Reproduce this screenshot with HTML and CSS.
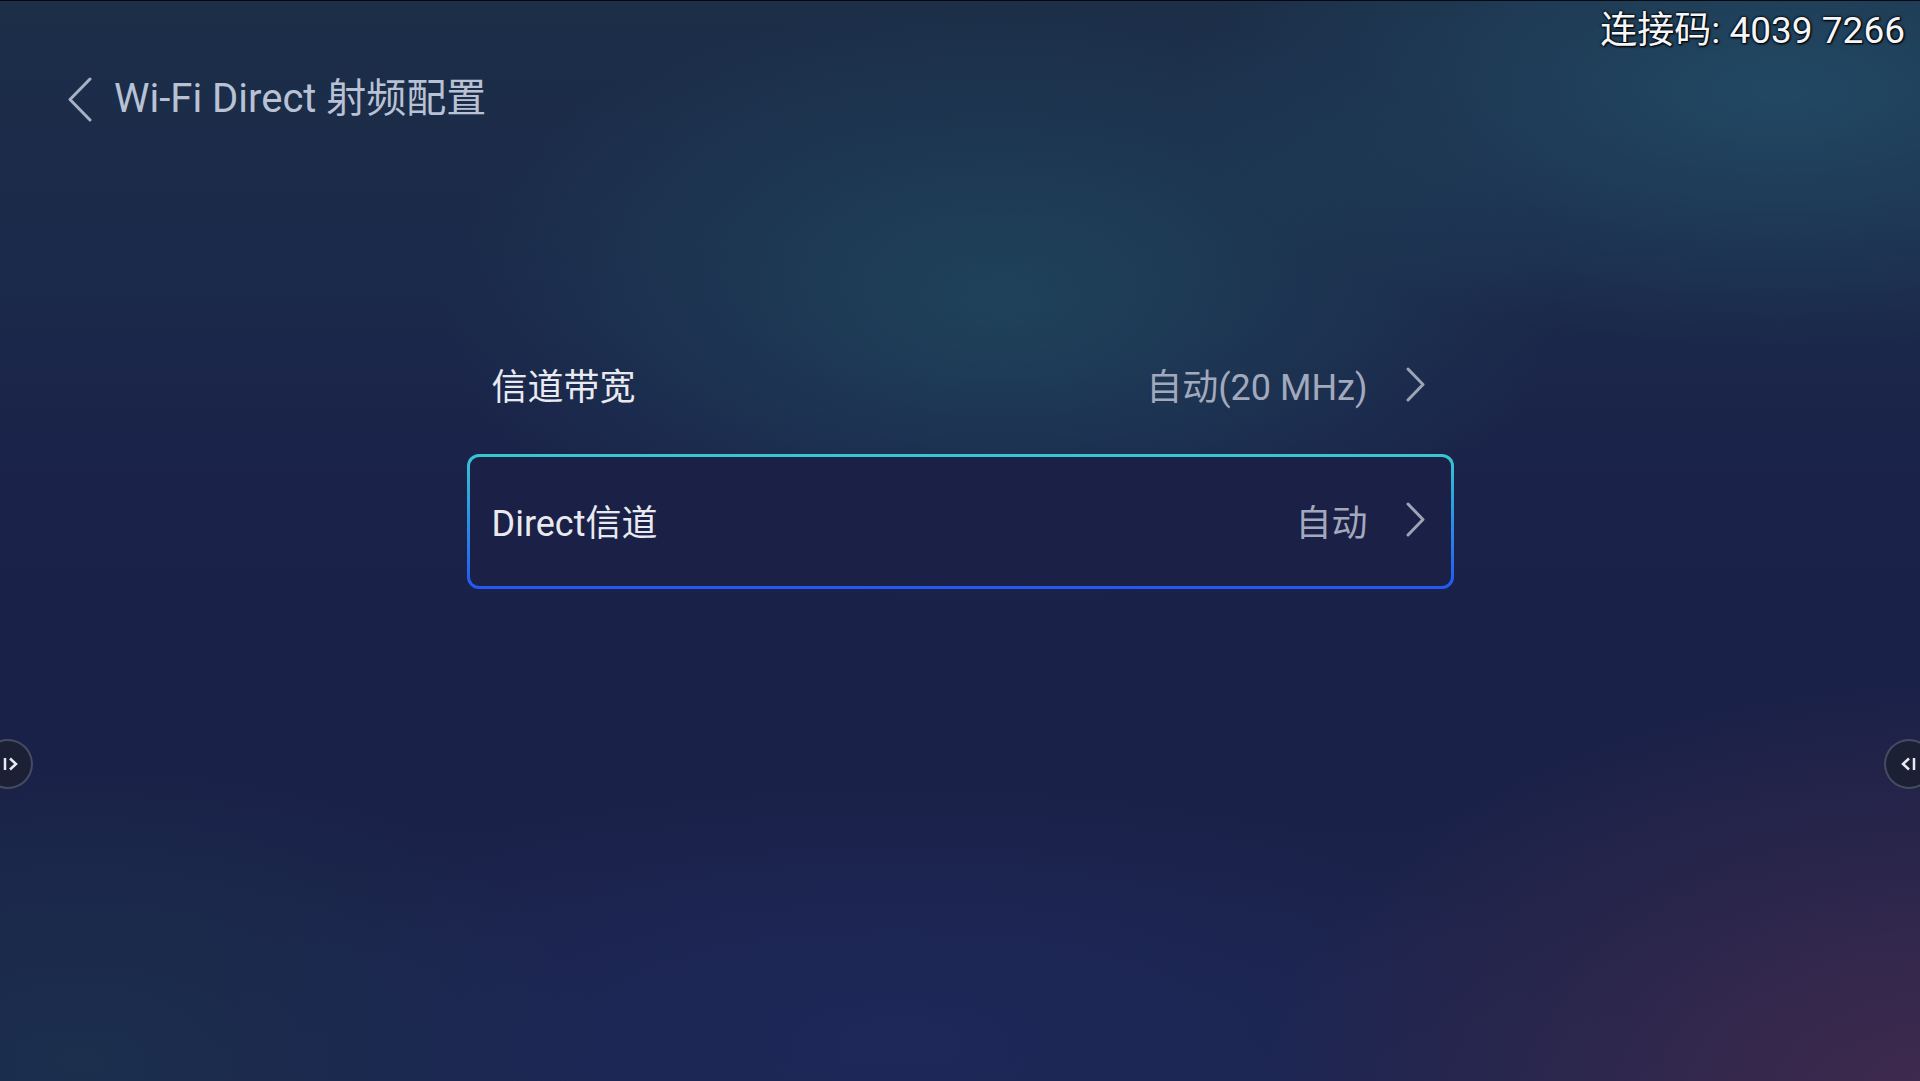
FILE: index.html
```html
<!DOCTYPE html>
<html lang="zh-CN">
<head>
    <meta charset="UTF-8">
    <meta name="viewport" content="width=device-width, initial-scale=1.0">
    <title>Wi-Fi Direct 射频配置</title>
    <link rel="stylesheet" href="styles.css">
</head>
<body>
    <div class="screen">
        <div class="pin-code">连接码: 4039 7266</div>

        <div class="header">
            <svg class="back-icon" width="26" height="45" viewBox="0 0 26 45">
                <polyline points="23,2 3,22.5 23,43" fill="none" stroke="#a8b2c6" stroke-width="3" stroke-linecap="round" stroke-linejoin="round"/>
            </svg>
            <h1 class="title">Wi-Fi Direct 射频配置</h1>
        </div>

        <div class="settings-list">
            <div class="setting-row">
                <span class="setting-label">信道带宽</span>
                <span class="setting-value">自动(20 MHz)</span>
                <svg class="arrow" width="20" height="35" viewBox="0 0 20 35">
                    <polyline points="2,2 17,17.5 2,33" fill="none" stroke="#9ea3b7" stroke-width="3" stroke-linecap="round" stroke-linejoin="round"/>
                </svg>
            </div>
            <div class="setting-row focused">
                <span class="setting-label">Direct信道</span>
                <span class="setting-value">自动</span>
                <svg class="arrow" width="20" height="35" viewBox="0 0 20 35">
                    <polyline points="2,2 17,17.5 2,33" fill="none" stroke="#9ea3b7" stroke-width="3" stroke-linecap="round" stroke-linejoin="round"/>
                </svg>
            </div>
        </div>

        <div class="side-handle left">
            <svg width="16" height="16" viewBox="0 0 16 16">
                <line x1="2" y1="2" x2="2" y2="14" stroke="#e8eaf0" stroke-width="2.5"/>
                <polyline points="7,2.5 13,8 7,13.5" fill="none" stroke="#e8eaf0" stroke-width="2.5"/>
            </svg>
        </div>
        <div class="side-handle right">
            <svg width="16" height="16" viewBox="0 0 16 16">
                <polyline points="9,2.5 3,8 9,13.5" fill="none" stroke="#e8eaf0" stroke-width="2.5"/>
                <line x1="14" y1="2" x2="14" y2="14" stroke="#e8eaf0" stroke-width="2.5"/>
            </svg>
        </div>
    </div>
</body>
</html>
```

FILE: styles.css
```css
body {
    margin: 0;
    padding: 0;
    font-family: Roboto, "Noto Sans CJK SC", sans-serif;
    background-color: #1a2148;
    overflow: hidden;
}
.screen {
    position: relative;
    width: 1920px;
    height: 1081px;
    box-sizing: border-box;
    border-top: 1px solid #05080d;
    display: flex;
    flex-direction: column;
    background:
        radial-gradient(ellipse 560px 300px at 1000px 300px, rgba(34, 84, 102, 0.6), rgba(34, 84, 102, 0) 100%),
        radial-gradient(ellipse 600px 260px at 1780px 90px, rgba(36, 84, 110, 0.7), rgba(36, 84, 110, 0) 100%),
        radial-gradient(ellipse 700px 420px at 1960px 1100px, rgba(78, 44, 78, 0.75), rgba(78, 44, 78, 0) 100%),
        radial-gradient(ellipse 700px 260px at 900px 1040px, rgba(32, 44, 100, 0.6), rgba(32, 44, 100, 0) 100%),
        radial-gradient(ellipse 520px 300px at 80px 1060px, rgba(28, 56, 78, 0.55), rgba(28, 56, 78, 0) 100%),
        linear-gradient(180deg, #1c2e48 0%, #1b2a4a 22%, #1a2249 45%, #1a2148 70%, #1b244c 100%);
}
.pin-code {
    position: absolute;
    top: 4px;
    right: 15px;
    font-size: 37px;
    line-height: 52px;
    color: #f4f6fa;
    text-shadow: 0 0 2px #000, 0 0 3px #000, 1px 1px 2px #000;
}
.header {
    display: flex;
    align-items: center;
    gap: 21px;
    margin-top: 73px;
    padding-left: 67px;
    height: 50px;
}
.back-icon {
    flex: none;
}
.title {
    margin: 0;
    font-size: 40px;
    font-weight: normal;
    color: #b8c2d4;
    line-height: 50px;
}
.settings-list {
    width: 987px;
    margin: 196px auto 0;
    display: flex;
    flex-direction: column;
}
.setting-row {
    display: flex;
    align-items: center;
    height: 134px;
    box-sizing: border-box;
    padding: 0 25px 6px 22px;
    border: 3.5px solid transparent;
    border-radius: 12px;
}
.setting-row.focused {
    height: 135px;
    padding-bottom: 4px;
    border-color: transparent;
    background:
        linear-gradient(#1a2046, #1a2046) padding-box,
        linear-gradient(180deg, #38c7cf 0%, #2d8fe4 50%, #2158f2 100%) border-box;
}
.setting-label {
    flex: 1;
    font-size: 36px;
    color: #e8eaf0;
}
.setting-value {
    font-size: 36px;
    color: #a3a9bd;
    margin-right: 38px;
}
.arrow {
    flex: none;
}
.side-handle {
    position: absolute;
    top: 738px;
    width: 46px;
    height: 46px;
    border: 2px solid rgba(120, 128, 150, 0.45);
    border-radius: 50%;
    background-color: #1c2034;
    display: flex;
    align-items: center;
}
.side-handle.left {
    left: -17px;
    justify-content: flex-end;
}
.side-handle.left svg {
    margin-right: 12px;
}
.side-handle.right {
    right: -14px;
    justify-content: flex-start;
}
.side-handle.right svg {
    margin-left: 14px;
}
```
